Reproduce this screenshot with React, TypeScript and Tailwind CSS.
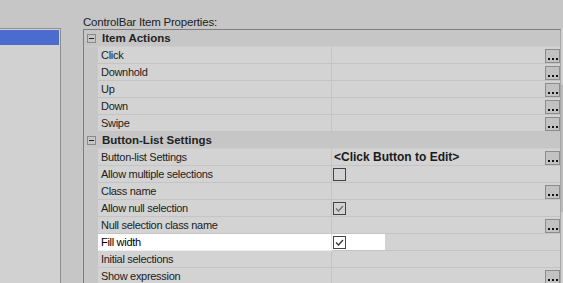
import React from 'react';

type Row =
  | { cat: string }
  | {
      name: string;
      value?: string;
      btn?: boolean;
      check?: 'off' | 'gray' | 'on';
      selected?: boolean;
    };

const ROWS: Row[] = [
  { cat: 'Item Actions' },
  { name: 'Click', btn: true },
  { name: 'Downhold', btn: true },
  { name: 'Up', btn: true },
  { name: 'Down', btn: true },
  { name: 'Swipe', btn: true },
  { cat: 'Button-List Settings' },
  { name: 'Button-list Settings', value: '<Click Button to Edit>', btn: true },
  { name: 'Allow multiple selections', check: 'off' },
  { name: 'Class name', btn: true },
  { name: 'Allow null selection', check: 'gray' },
  { name: 'Null selection class name', btn: true },
  { name: 'Fill width', check: 'on', selected: true },
  { name: 'Initial selections' },
  { name: 'Show expression', btn: true },
];

function MinusBox() {
  return (
    <div className="w-[9px] h-[9px] border border-[#8a8a8a] flex items-center justify-center">
      <div className="w-[5px] h-px bg-[#222]" />
    </div>
  );
}

function DotsButton() {
  return (
    <div className="mt-[2px] w-[15px] h-[14px] shrink-0 border border-[#8c8c8c] bg-[#c2c2c2] flex items-end justify-center gap-[2px] pb-[2px]">
      <div className="w-[2px] h-[2px] bg-[#111]" />
      <div className="w-[2px] h-[2px] bg-[#111]" />
      <div className="w-[2px] h-[2px] bg-[#111]" />
    </div>
  );
}

function CheckBox({ state }: { state: 'off' | 'gray' | 'on' }) {
  return (
    <div className="mt-[2px] ml-[1px] w-[13px] h-[13px] border border-[#444] flex items-center justify-center">
      {state !== 'off' && (
        <svg width="11" height="11" viewBox="0 0 11 11">
          <path
            d="M2 5.5 L4.5 8 L9 3"
            fill="none"
            stroke={state === 'gray' ? '#707070' : '#333'}
            strokeWidth="1.3"
          />
        </svg>
      )}
    </div>
  );
}

export default function App() {
  return (
    <div
      className="w-[563px] h-[283px] bg-[#c6c6c6] flex overflow-hidden text-[11px] text-[#1c1c1c]"
      style={{ fontFamily: '"Liberation Sans", Arial, sans-serif' }}
    >
      {/* Left list */}
      <div className="w-[61px] pt-[28px] flex flex-col">
        <div className="flex-1 bg-[#d1d1d1] border-t border-r border-[#8e8e8e] pt-[1px]">
          <div className="h-[15px] bg-[#4a6ccf] mr-[1px]" />
        </div>
      </div>

      <div className="w-[22px]" />

      {/* Properties */}
      <div className="flex-1 flex flex-col min-h-0">
        <div className="h-[29px] shrink-0 pt-[15px] leading-[14px] text-[11.5px] tracking-[-0.2px] text-[#222]">
          ControlBar Item Properties:
        </div>
        <div className="flex-1 flex min-h-0 overflow-hidden">
          <div className="flex-1 border-t border-l border-r border-t-[#7e7e7e] border-l-[#7e7e7e] border-r-[#a8a8a8]">
            {ROWS.map((r, i) =>
              'cat' in r ? (
                <div key={i} className="h-[17px] flex border-b border-[#cdcdcd]">
                  <div className="w-[14px] flex items-center justify-center pl-[1px]">
                    <MinusBox />
                  </div>
                  <div className="flex-1 pl-[4px] font-bold text-[11.5px] leading-[16px] text-[#222]">{r.cat}</div>
                </div>
              ) : (
                <div key={i} className="h-[17px] flex">
                  <div className="w-[14px]" />
                  <div
                    className={`w-[234px] pl-[3px] text-[11px] tracking-[-0.3px] leading-[16px] border-b border-r ${
                      r.selected ? 'bg-white border-b-[#efefef] border-r-[#e6e6e6] text-black' : 'bg-[#d3d3d3] border-[#c4c4c4]'
                    }`}
                  >
                    {r.name}
                  </div>
                  <div className="flex-1 flex bg-[#d3d3d3] border-b border-[#c4c4c4]">
                    <div className={`flex ${r.selected ? 'w-[53px] bg-white' : 'flex-1'}`}>
                      {r.check && <CheckBox state={r.check} />}
                      {r.value && (
                        <span className="pl-[2px] font-bold text-[12px] leading-[16px] text-[#1a1a1a]">{r.value}</span>
                      )}
                    </div>
                    {r.selected && <div className="flex-1" />}
                    {r.btn && <DotsButton />}
                  </div>
                </div>
              ),
            )}
          </div>
          {/* scrollbar */}
          <div className="w-[2px] flex flex-col bg-[#cfcfcf]">
            <div className="h-[56px]" />
            <div className="h-[127px] bg-[#b9b9b9]" />
          </div>
        </div>
      </div>
    </div>
  );
}
